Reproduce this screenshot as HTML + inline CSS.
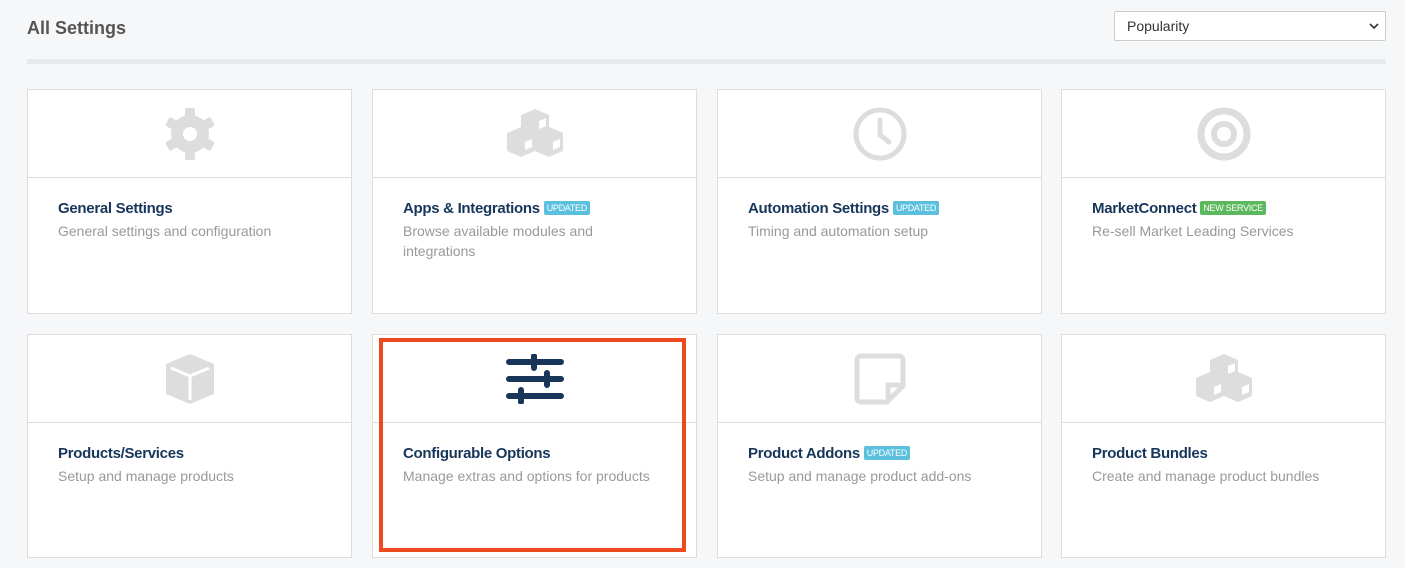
<!DOCTYPE html>
<html><head><meta charset="utf-8"><style>
body{margin:0;width:1405px;height:568px;background:#f6f7f9;font-family:"Liberation Sans",sans-serif;position:relative;overflow:hidden}
h1{position:absolute;left:27px;top:18px;margin:0;font-size:18px;font-weight:bold;color:#555}
.sel{position:absolute;left:1114px;top:11px;width:272px;height:30px;border:1px solid #ccc;background:#fff;border-radius:2px;box-sizing:border-box;font-size:14px;color:#333;padding:6px 12px}
.sel svg{position:absolute;right:6px;top:10px}
.bar{position:absolute;left:27px;top:59px;width:1359px;height:5px;background:#e8e9eb}
.card{position:absolute;width:325px;background:#fff;border:1px solid #ddd;box-sizing:border-box}
.ic{height:87px;border-bottom:1px solid #ddd;display:flex;align-items:center;justify-content:center}
.t{margin:22px 0 0 30px;font-size:15px;color:#17365a;font-weight:bold;letter-spacing:-0.3px}
.d{margin:4px 30px 0 30px;font-size:14px;color:#999;line-height:20px}
.b{display:inline-block;font-size:9px;color:#fff;background:#5bc0de;padding:2px 3px;border-radius:2px;vertical-align:2px;font-weight:normal;letter-spacing:-0.3px}
.g{background:#5cb85c}
.red{position:absolute;left:379px;top:338px;width:307px;height:214px;border:4px solid #ee4a1f;box-sizing:border-box}
</style></head><body>
<h1>All Settings</h1>
<div class="sel">Popularity<svg width="10" height="8" viewBox="0 0 10 8"><path d="M1 2l4 4 4-4" fill="none" stroke="#333" stroke-width="1.6"/></svg></div>
<div class="bar"></div>

<div class="card" style="left:27px;top:89px;height:225px"><div class="ic"><svg width="54" height="54" viewBox="0 0 54 54"><g fill="#ddd"><circle cx="27" cy="27" r="19"/><rect x="22" y="1" width="10" height="52" rx="2"/><rect x="22" y="1" width="10" height="52" rx="2" transform="rotate(60 27 27)"/><rect x="22" y="1" width="10" height="52" rx="2" transform="rotate(120 27 27)"/></g><circle cx="27" cy="27" r="7" fill="#fff"/></svg></div><div class="t">General Settings</div><div class="d">General settings and configuration</div></div>

<div class="card" style="left:372px;top:89px;height:225px"><div class="ic"><svg width="58" height="50" viewBox="0 0 58 50"><g fill="#ddd"><path d="M29 0l14 6v16l-14 6-14-6V6z"/><path d="M15 18l14 6v18l-14 6-14-6V24z"/><path d="M43 18l14 6v18l-14 6-14-6V24z"/></g><g fill="#fff"><path d="M19 33l7-3v8l-7 3z"/><path d="M47 33l7-3v8l-7 3z"/><path d="M33 12l7-3v8l-7 3z"/></g></svg></div><div class="t">Apps &amp; Integrations <span class="b">UPDATED</span></div><div class="d">Browse available modules and integrations</div></div>

<div class="card" style="left:717px;top:89px;height:225px"><div class="ic"><svg width="56" height="56" viewBox="0 0 56 56"><circle cx="28" cy="28" r="24" fill="none" stroke="#ddd" stroke-width="5"/><path d="M28 14v15l9 7" fill="none" stroke="#ddd" stroke-width="5" stroke-linecap="round"/></svg></div><div class="t">Automation Settings <span class="b">UPDATED</span></div><div class="d">Timing and automation setup</div></div>

<div class="card" style="left:1061px;top:89px;height:225px"><div class="ic"><svg width="56" height="56" viewBox="0 0 56 56"><circle cx="28" cy="28" r="23" fill="none" stroke="#ddd" stroke-width="7"/><circle cx="28" cy="28" r="10" fill="none" stroke="#ddd" stroke-width="6"/></svg></div><div class="t">MarketConnect <span class="b g">NEW SERVICE</span></div><div class="d">Re-sell Market Leading Services</div></div>

<div class="card" style="left:27px;top:334px;height:224px"><div class="ic"><svg width="56" height="56" viewBox="0 0 56 56"><path d="M28 3l24 10v30L28 53 4 43V13z" fill="#ddd"/><path d="M9 17l19 8 19-8M28 25v24" fill="none" stroke="#fff" stroke-width="3"/></svg></div><div class="t">Products/Services</div><div class="d">Setup and manage products</div></div>

<div class="card" style="left:372px;top:334px;height:224px"><div class="ic"><svg width="58" height="50" viewBox="0 0 58 50"><g stroke="#17365a" stroke-linecap="round"><path d="M3 8h52M3 25h52M3 42h52" stroke-width="6"/><path d="M28 2v12M41 19v12M15 36v12" stroke-width="6"/></g></svg></div><div class="t">Configurable Options</div><div class="d">Manage extras and options for products</div></div>

<div class="card" style="left:717px;top:334px;height:224px"><div class="ic"><svg width="54" height="54" viewBox="0 0 54 54"><path d="M8 4h38a4 4 0 0 1 4 4v26L34 50H8a4 4 0 0 1-4-4V8a4 4 0 0 1 4-4z" fill="none" stroke="#ddd" stroke-width="5" stroke-linejoin="round"/><path d="M48 33H35v14" fill="none" stroke="#ddd" stroke-width="5"/></svg></div><div class="t">Product Addons <span class="b">UPDATED</span></div><div class="d">Setup and manage product add-ons</div></div>

<div class="card" style="left:1061px;top:334px;height:224px"><div class="ic"><svg width="58" height="50" viewBox="0 0 58 50"><g fill="#ddd"><path d="M29 0l14 6v16l-14 6-14-6V6z"/><path d="M15 18l14 6v18l-14 6-14-6V24z"/><path d="M43 18l14 6v18l-14 6-14-6V24z"/></g><g fill="#fff"><path d="M19 33l7-3v8l-7 3z"/><path d="M47 33l7-3v8l-7 3z"/><path d="M33 12l7-3v8l-7 3z"/></g></svg></div><div class="t">Product Bundles</div><div class="d">Create and manage product bundles</div></div>

<div class="red"></div>
</body></html>
